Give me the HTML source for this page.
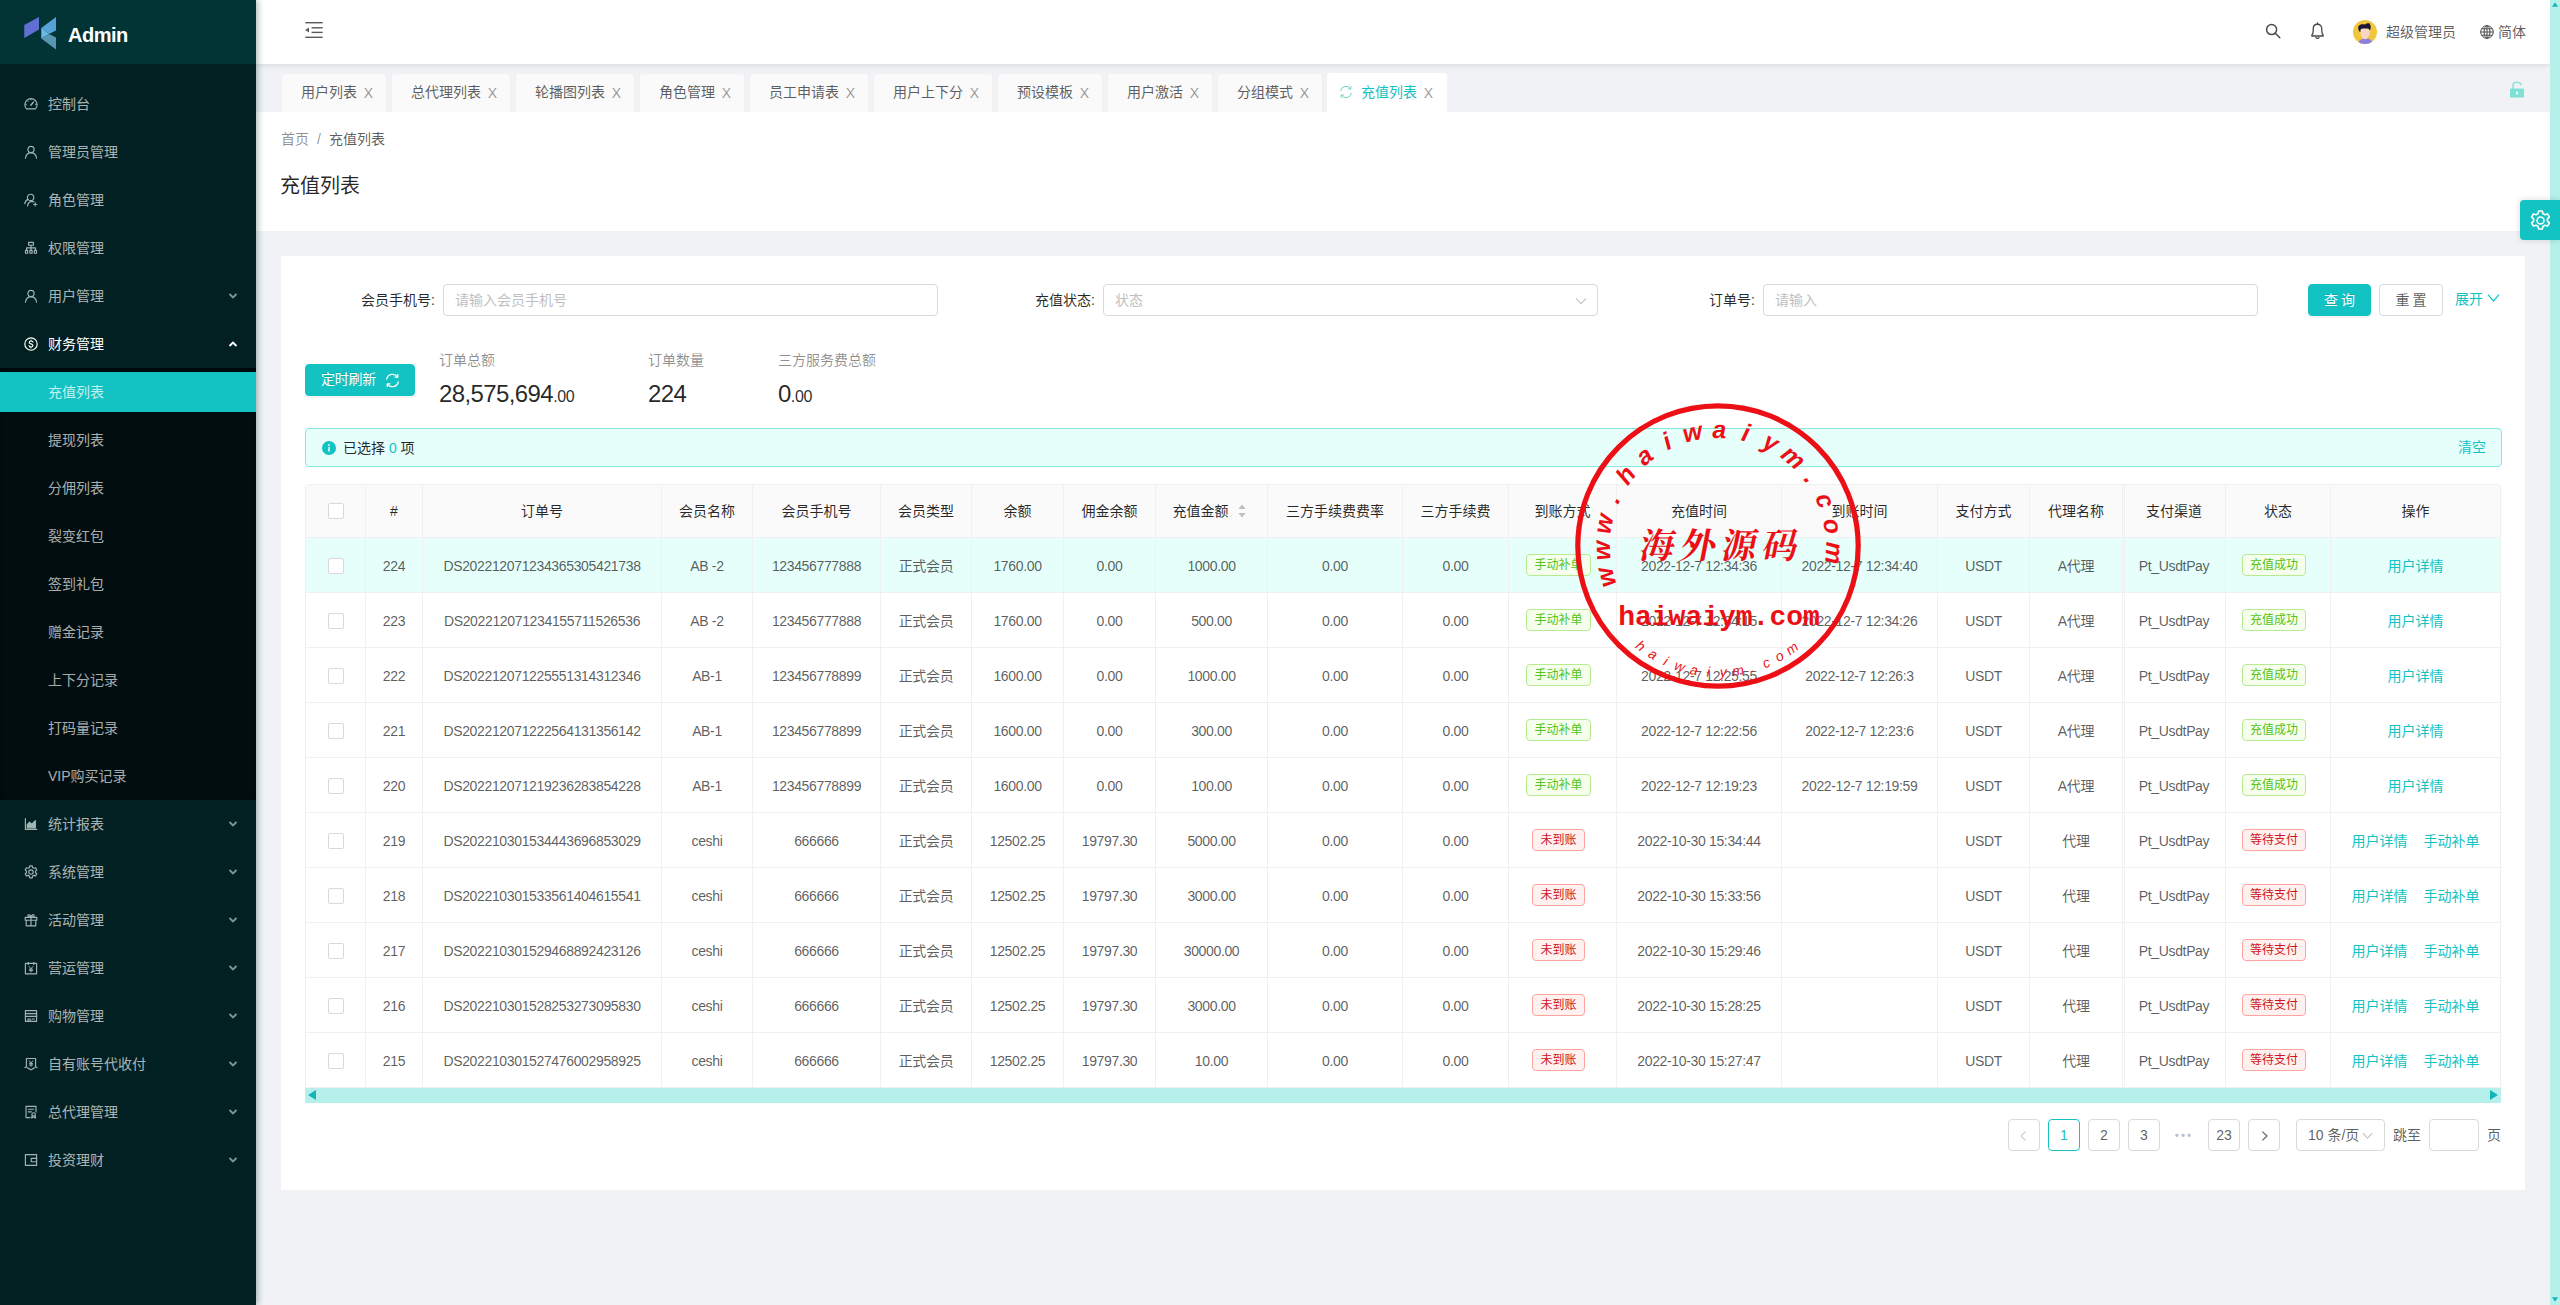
<!DOCTYPE html>
<html lang="zh-CN">
<head>
<meta charset="utf-8">
<title>充值列表 - Admin</title>
<style>
*{box-sizing:border-box;margin:0;padding:0}
html,body{width:2560px;height:1305px;overflow:hidden}
body{position:relative;background:#f0f2f5;font-family:"Liberation Sans","Noto Sans CJK SC",sans-serif;font-size:14px;color:rgba(0,0,0,.65);line-height:1.5715}
a{color:#13c2c2;text-decoration:none;cursor:pointer}
ul{list-style:none}
.abs{position:absolute}

/* ---------- sidebar ---------- */
#sider{position:absolute;left:0;top:0;width:256px;height:1305px;background:#022021;box-shadow:2px 0 6px rgba(0,45,48,.32);z-index:5}
#logo{position:absolute;left:0;top:0;width:256px;height:64px;background:#023435}
#logo svg{position:absolute;left:24px;top:16px}
#logo h1{position:absolute;left:68px;top:18px;font-size:20px;line-height:34px;font-weight:bold;color:#fff;font-family:"Liberation Sans",sans-serif;letter-spacing:-.5px}
.mi{position:absolute;left:0;width:256px;height:40px;line-height:40px;color:rgba(255,255,255,.68);font-size:14px}
.mi svg.ic{position:absolute;left:24px;top:13px}
.mi span.t{position:absolute;left:48px;top:0;white-space:nowrap}
.mi svg.ar{position:absolute;left:228px;top:15px}
.mi.open svg.ar{top:16px}
.mi.open{color:#fff}
#sub{position:absolute;left:0;top:368px;width:256px;height:432px;background:#010d0e;box-shadow:inset 0 3px 6px -2px rgba(0,0,0,.6)}
.mi.act{background:#13c2c2;color:#c2f0ee}

/* ---------- header ---------- */
#header{position:absolute;left:256px;top:0;width:2294px;height:64px;background:#fff;box-shadow:0 1px 6px rgba(0,21,41,.12);z-index:4}
#header .tog{position:absolute;left:49px;top:22px}
.hr{position:absolute;top:0;height:64px;line-height:64px;font-size:14px;color:rgba(0,0,0,.65);white-space:nowrap}

/* ---------- tabs ---------- */
#tabs{position:absolute;left:256px;top:64px;width:2294px;height:48px;background:#f0f2f5}
.tab{position:absolute;top:9px;height:39px;line-height:37px;background:#fafafa;border:1px solid #f0f0f0;border-bottom:none;border-radius:4px 4px 0 0;font-size:14px;color:rgba(0,0,0,.65);padding-left:19px;white-space:nowrap}
.tab i{font-style:normal;position:absolute;right:13px;top:1px;font-size:14px;color:rgba(0,0,0,.42);font-family:"Liberation Sans",sans-serif}
.tab.on{background:#fff;border-color:#fff;color:#13c2c2}

/* ---------- page header ---------- */
#ph{position:absolute;left:256px;top:112px;width:2294px;height:119px;background:#fff}
#crumb{position:absolute;left:25px;top:16px;font-size:14px;line-height:22px;color:rgba(0,0,0,.45);white-space:nowrap}
#crumb b{font-weight:normal;color:rgba(0,0,0,.65)}
#crumb em{font-style:normal;margin:0 8px}
#title{position:absolute;left:24px;top:58px;font-size:20px;line-height:32px;color:rgba(0,0,0,.85);font-weight:normal}

/* ---------- card ---------- */
#card{position:absolute;left:281px;top:256px;width:2244px;height:934px;background:#fff}
.lbl{position:absolute;top:28px;height:32px;line-height:32px;color:rgba(0,0,0,.85);font-size:14px;text-align:right;white-space:nowrap}
.inp{position:absolute;top:28px;height:32px;width:495px;border:1px solid #d9d9d9;border-radius:4px;background:#fff;line-height:30px;padding-left:11px;color:#bfbfbf;font-size:14px}
.btn{position:absolute;height:32px;line-height:30px;border-radius:4px;font-size:14px;text-align:center;border:1px solid #d9d9d9;background:#fff;color:rgba(0,0,0,.65)}
.btn.pri{background:#13c2c2;border-color:#13c2c2;color:#fff;text-shadow:0 -1px 0 rgba(0,0,0,.12);box-shadow:0 2px 0 rgba(0,0,0,.045)}
.stat{position:absolute;top:93px;white-space:nowrap}
.stat .k{font-size:14px;line-height:22px;color:rgba(0,0,0,.45);display:block}
.stat .v{font-size:24px;line-height:38px;color:rgba(0,0,0,.85);display:block;margin-top:4px;letter-spacing:-.6px;font-family:"Liberation Sans",sans-serif}
.stat .v small{font-size:16px;letter-spacing:-.3px}
#alert{position:absolute;left:24px;top:172px;width:2197px;height:39px;background:#e6fffb;border:1px solid #87e8de;border-radius:4px;line-height:37px;font-size:14px;color:rgba(0,0,0,.85)}
#alert svg{position:absolute;left:16px;top:12px}
#alert .m{position:absolute;left:37px;top:1px;white-space:nowrap}
#alert .m i{font-style:normal;color:#13c2c2}
#alert a{position:absolute;right:15px;top:0}

/* ---------- table ---------- */
.tblwrap{position:absolute;left:305px;top:484px;width:2196px}
.tbl{border-collapse:separate;border-spacing:0;table-layout:fixed;width:2196px;border-top:1px solid #f0f0f0;border-left:1px solid #f0f0f0;border-radius:4px 4px 0 0}
.tbl th,.tbl td{border-right:1px solid #f0f0f0;border-bottom:1px solid #f0f0f0;text-align:center;font-size:14px;white-space:nowrap;padding:0;overflow:hidden}
.tbl th{height:53px;background:#fafafa;color:rgba(0,0,0,.85);font-weight:normal}
.tbl td{height:55px;color:rgba(0,0,0,.65);background:#fff;letter-spacing:-.35px;padding-top:2px}
.tbl tr.hl td{background:#e6fffb}
.cb{display:inline-block;width:16px;height:16px;border:1px solid #d9d9d9;border-radius:2px;background:#fff;vertical-align:middle;position:relative;top:-1px}
.sortwrap{display:inline-block;position:relative;padding-right:18px;left:-2px}
.sorter{position:absolute;right:0;top:3px}
.tag{display:inline-block;height:22px;line-height:20px;padding:0 7px;font-size:12px;border:1px solid;border-radius:4px;letter-spacing:0;position:relative;top:-2px;margin-right:8px}
.tag.green{color:#52c41a;background:#f6ffed;border-color:#b7eb8f}
.tag.red{color:#cf1322;background:#fff1f0;border-color:#ffa39e}
.tbl td a{letter-spacing:0}
.tbl td a.a2{margin-left:16px}
.hscroll{position:relative;height:15px;width:2196px;background:#b5f1ea}
.hscroll svg{position:absolute;top:2px}
.hscroll svg.l{left:3px}
.hscroll svg.r{right:3px}

/* ---------- pagination ---------- */
.pg{position:absolute;top:1119px;height:32px;line-height:30px;border:1px solid #d9d9d9;border-radius:4px;background:#fff;text-align:center;font-size:14px;color:rgba(0,0,0,.65);font-family:"Liberation Sans","Noto Sans CJK SC",sans-serif}
.pg.on{border-color:#13c2c2;color:#13c2c2}
.pgt{position:absolute;top:1119px;height:32px;line-height:32px;font-size:14px;color:rgba(0,0,0,.65);white-space:nowrap}

/* ---------- misc ---------- */
#vscroll{position:absolute;left:2550px;top:0;width:10px;height:1305px;background:#b5f1ea;z-index:6}
#gear{position:absolute;left:2520px;top:200px;width:40px;height:40px;background:#13c2c2;border-radius:4px 0 0 4px;z-index:7;box-shadow:0 0 6px rgba(0,0,0,.15)}
#gear svg{position:absolute;left:8.5px;top:8.5px}
.stamp{position:absolute;left:1557.8px;top:386.4px;z-index:8}

</style>
</head>
<body>
<div id="sider">
<div id="logo"><svg width="34" height="34" viewBox="0 0 34 34"><path d="M0.25 9 L15 1 V13.5 L0.25 22 Z" fill="#5f6fd4"/><path d="M17.25 12 L32 1 V14.5 L25 18 Z" fill="#55a3d8"/><path d="M17.25 12 L25 18 L17.25 22.5 Z" fill="#6cb8e8"/><path d="M17.25 22.5 L25 18 L32 21.5 V33.5 Z" fill="#5896b2"/></svg><h1>Admin</h1></div>
<div class="mi" style="top:84px"><svg class="ic" width="14" height="14" viewBox="0 0 14 14" fill="none" stroke="#a3b4b4" stroke-width="1.15" stroke-linecap="round" stroke-linejoin="round"><path d="M2.5 11.9 A6.1 6.1 0 1 1 11.5 11.9 Z"/><path d="M6.8 8.2 L9.3 5.2" stroke-width="1.4"/><path d="M7 1.9v1M3.2 3.7l.7.7M10.8 3.7l-.5.5M1.6 7.3h1M11.4 7.3h1" stroke-width=".9"/></svg><span class="t">控制台</span></div>
<div class="mi" style="top:132px"><svg class="ic" width="14" height="14" viewBox="0 0 14 14" fill="none" stroke="#a3b4b4" stroke-width="1.15" stroke-linecap="round" stroke-linejoin="round"><circle cx="7" cy="4.4" r="3.1"/><path d="M1.5 13.1 C1.8 9.7 4.1 7.9 7 7.9 C9.9 7.9 12.2 9.7 12.5 13.1"/></svg><span class="t">管理员管理</span></div>
<div class="mi" style="top:180px"><svg class="ic" width="14" height="14" viewBox="0 0 14 14" fill="none" stroke="#a3b4b4" stroke-width="1.15" stroke-linecap="round" stroke-linejoin="round"><circle cx="6.6" cy="4.4" r="3.2"/><path d="M4 6.4 C2.2 7.2 1 8.6 .8 10.6"/><path d="M3.6 13 C3.8 10.4 5.4 8.6 7.8 8.4 C8.6 8.4 9.2 8.5 9.8 8.8"/><path d="M9.4 11.4 H13 M11.2 9.6 V13.2" stroke-width="1"/></svg><span class="t">角色管理</span></div>
<div class="mi" style="top:228px"><svg class="ic" width="14" height="14" viewBox="0 0 14 14" fill="none" stroke="#a3b4b4" stroke-width="1.15" stroke-linecap="round" stroke-linejoin="round"><rect x="4.6" y="1.4" width="4.8" height="2.8"/><path d="M7 4.2 V6.8 M2.6 9 V6.8 H11.4 V9 M7 6.8 V9"/><rect x="1.5" y="9.4" width="2.2" height="2.8"/><rect x="5.9" y="9.4" width="2.2" height="2.8"/><rect x="10.3" y="9.4" width="2.2" height="2.8"/></svg><span class="t">权限管理</span></div>
<div class="mi" style="top:276px"><svg class="ic" width="14" height="14" viewBox="0 0 14 14" fill="none" stroke="#a3b4b4" stroke-width="1.15" stroke-linecap="round" stroke-linejoin="round"><circle cx="7" cy="4.4" r="3.1"/><path d="M1.5 13.1 C1.8 9.7 4.1 7.9 7 7.9 C9.9 7.9 12.2 9.7 12.5 13.1"/></svg><span class="t">用户管理</span><svg class="ar" width="10" height="9" viewBox="0 0 10 9" fill="none" stroke="#7f9393" stroke-width="1.9" stroke-linejoin="miter"><path d="M1.5 3 L5 6.4 L8.5 3"/></svg></div>
<div class="mi open" style="top:324px"><svg class="ic" width="14" height="14" viewBox="0 0 14 14" fill="none" stroke="#fff" stroke-width="1.15" stroke-linecap="round" stroke-linejoin="round"><circle cx="7" cy="7" r="6.2"/><path d="M8.9 5.1 C8.5 4.3 7.8 4 7 4 C5.9 4 5.2 4.6 5.2 5.4 C5.2 7.3 8.9 6.4 8.9 8.5 C8.9 9.4 8.1 10 7 10 C6 10 5.3 9.6 5 8.8 M7 3v1 M7 10v1"/></svg><span class="t">财务管理</span><svg class="ar" width="10" height="9" viewBox="0 0 10 9" fill="none" stroke="#fff" stroke-width="1.9" stroke-linejoin="miter"><path d="M1.5 6 L5 2.6 L8.5 6"/></svg></div>
<div id="sub"></div>
<div class="mi act" style="top:372px"><span class="t">充值列表</span></div>
<div class="mi" style="top:420px"><span class="t">提现列表</span></div>
<div class="mi" style="top:468px"><span class="t">分佣列表</span></div>
<div class="mi" style="top:516px"><span class="t">裂变红包</span></div>
<div class="mi" style="top:564px"><span class="t">签到礼包</span></div>
<div class="mi" style="top:612px"><span class="t">赠金记录</span></div>
<div class="mi" style="top:660px"><span class="t">上下分记录</span></div>
<div class="mi" style="top:708px"><span class="t">打码量记录</span></div>
<div class="mi" style="top:756px"><span class="t">VIP购买记录</span></div>
<div class="mi" style="top:804px"><svg class="ic" width="14" height="14" viewBox="0 0 14 14" fill="none" stroke="#a3b4b4" stroke-width="1.15" stroke-linecap="round" stroke-linejoin="round"><path d="M1.4 1.6 V12.4 H12.8"/><path d="M3.2 10.8 V7.6 L5.6 5.2 L7.6 7.4 L11.4 3.6 V10.8 Z" fill="#a3b4b4"/></svg><span class="t">统计报表</span><svg class="ar" width="10" height="9" viewBox="0 0 10 9" fill="none" stroke="#7f9393" stroke-width="1.9" stroke-linejoin="miter"><path d="M1.5 3 L5 6.4 L8.5 3"/></svg></div>
<div class="mi" style="top:852px"><svg class="ic" width="14" height="14" viewBox="0 0 14 14" fill="none" stroke="#a3b4b4" stroke-width="1.15" stroke-linecap="round" stroke-linejoin="round"><circle cx="7" cy="7" r="2.2"/><path d="M5.8 .8 h2.4 l.4 1.7 l1.3 .75 l1.7 -.5 l1.2 2.1 l-1.3 1.2 v1.5 l1.3 1.2 l-1.2 2.1 l-1.7 -.5 l-1.3 .75 l-.4 1.7 h-2.4 l-.4 -1.7 l-1.3 -.75 l-1.7 .5 l-1.2 -2.1 l1.3 -1.2 v-1.5 l-1.3 -1.2 l1.2 -2.1 l1.7 .5 l1.3 -.75 Z"/></svg><span class="t">系统管理</span><svg class="ar" width="10" height="9" viewBox="0 0 10 9" fill="none" stroke="#7f9393" stroke-width="1.9" stroke-linejoin="miter"><path d="M1.5 3 L5 6.4 L8.5 3"/></svg></div>
<div class="mi" style="top:900px"><svg class="ic" width="14" height="14" viewBox="0 0 14 14" fill="none" stroke="#a3b4b4" stroke-width="1.15" stroke-linecap="round" stroke-linejoin="round"><rect x="1.2" y="4.4" width="11.6" height="2.8"/><path d="M2.2 7.2 V12.8 H11.8 V7.2 M7 4.4 V12.8"/><path d="M7 4.4 C5 4.4 3.6 3.6 3.9 2.4 C4.3 1.1 6.4 1.6 7 4.4 C7.6 1.6 9.7 1.1 10.1 2.4 C10.4 3.6 9 4.4 7 4.4"/></svg><span class="t">活动管理</span><svg class="ar" width="10" height="9" viewBox="0 0 10 9" fill="none" stroke="#7f9393" stroke-width="1.9" stroke-linejoin="miter"><path d="M1.5 3 L5 6.4 L8.5 3"/></svg></div>
<div class="mi" style="top:948px"><svg class="ic" width="14" height="14" viewBox="0 0 14 14" fill="none" stroke="#a3b4b4" stroke-width="1.15" stroke-linecap="round" stroke-linejoin="round"><rect x="1.4" y="2.4" width="11.2" height="10.4"/><path d="M4.2 1.2 V3.6 M9.8 1.2 V3.6"/><path d="M5.2 5.6 L7 7.8 L8.8 5.6 M7 7.8 V11 M5.4 8.2 H8.6 M5.4 9.6 H8.6" stroke-width=".95"/></svg><span class="t">营运管理</span><svg class="ar" width="10" height="9" viewBox="0 0 10 9" fill="none" stroke="#7f9393" stroke-width="1.9" stroke-linejoin="miter"><path d="M1.5 3 L5 6.4 L8.5 3"/></svg></div>
<div class="mi" style="top:996px"><svg class="ic" width="14" height="14" viewBox="0 0 14 14" fill="none" stroke="#a3b4b4" stroke-width="1.15" stroke-linecap="round" stroke-linejoin="round"><rect x="1.4" y="1.6" width="11.2" height="10.8"/><path d="M1.4 4.6 H12.6 M1.4 7.4 H12.6"/><path d="M4 12.4 V10 H6.2 V12.4 M8 10 H10.4"/></svg><span class="t">购物管理</span><svg class="ar" width="10" height="9" viewBox="0 0 10 9" fill="none" stroke="#7f9393" stroke-width="1.9" stroke-linejoin="miter"><path d="M1.5 3 L5 6.4 L8.5 3"/></svg></div>
<div class="mi" style="top:1044px"><svg class="ic" width="14" height="14" viewBox="0 0 14 14" fill="none" stroke="#a3b4b4" stroke-width="1.15" stroke-linecap="round" stroke-linejoin="round"><path d="M2.4 1.5 H11.6 V9.8 L13 10.6 M11.6 9.8 C10.6 11.6 8.6 11.4 7 12.9 C5.4 11.4 3.4 11.6 2.4 9.8 L1 10.6 M2.4 9.8 V1.5"/><path d="M5.2 3.8 L7 6 L8.8 3.8 M7 6 V9.4 M5.4 6.6 H8.6 M5.4 8 H8.6" stroke-width=".95"/></svg><span class="t">自有账号代收付</span><svg class="ar" width="10" height="9" viewBox="0 0 10 9" fill="none" stroke="#7f9393" stroke-width="1.9" stroke-linejoin="miter"><path d="M1.5 3 L5 6.4 L8.5 3"/></svg></div>
<div class="mi" style="top:1092px"><svg class="ic" width="14" height="14" viewBox="0 0 14 14" fill="none" stroke="#a3b4b4" stroke-width="1.15" stroke-linecap="round" stroke-linejoin="round"><path d="M12 7 V1.4 H2 V12.6 H6"/><path d="M4.2 4.2 H9.8 M4.2 6.8 H7.4"/><circle cx="9.6" cy="9.4" r="1.7"/><path d="M8.2 10.6 L7.6 13 L9.6 12 L11.6 13 L11 10.6"/></svg><span class="t">总代理管理</span><svg class="ar" width="10" height="9" viewBox="0 0 10 9" fill="none" stroke="#7f9393" stroke-width="1.9" stroke-linejoin="miter"><path d="M1.5 3 L5 6.4 L8.5 3"/></svg></div>
<div class="mi" style="top:1140px"><svg class="ic" width="14" height="14" viewBox="0 0 14 14" fill="none" stroke="#a3b4b4" stroke-width="1.15" stroke-linecap="round" stroke-linejoin="round"><rect x="1.4" y="1.6" width="11.2" height="10.8"/><path d="M12.6 5.3 H7.2 V8.7 H12.6"/></svg><span class="t">投资理财</span><svg class="ar" width="10" height="9" viewBox="0 0 10 9" fill="none" stroke="#7f9393" stroke-width="1.9" stroke-linejoin="miter"><path d="M1.5 3 L5 6.4 L8.5 3"/></svg></div>
</div>
<div id="header">
<svg class="tog" width="18" height="16" viewBox="0 0 18 16" fill="#595959"><rect x="0.3" y="0" width="17.4" height="1.4"/><rect x="6.6" y="5.1" width="11.1" height="1.4"/><rect x="6.6" y="9.7" width="11.1" height="1.4"/><rect x="0.3" y="14.6" width="17.4" height="1.4"/><path d="M0.2 8.1 L4 5.6 V10.6 Z"/></svg>
<svg class="abs" style="left:2009px;top:23px" width="16" height="16" viewBox="0 0 16 16" fill="none" stroke="#4a4a4a" stroke-width="1.5" stroke-linecap="round"><circle cx="6.6" cy="6.6" r="5"/><path d="M10.3 10.3 L14.8 14.8"/></svg>
<svg class="abs" style="left:2054px;top:22px" width="15" height="18" viewBox="0 0 16 18" preserveAspectRatio="none" fill="none" stroke="#4a4a4a" stroke-width="1.4" stroke-linejoin="round" stroke-linecap="round"><path d="M2 14 H14 V13 C13 12 12.6 11 12.6 9 V7 C12.6 4 10.6 2.3 8 2.3 C5.4 2.3 3.4 4 3.4 7 V9 C3.4 11 3 12 2 13 Z"/><path d="M8 1 V2.2"/><path d="M6.4 15.6 C6.8 16.6 9.2 16.6 9.6 15.6"/></svg>
<svg class="abs" style="left:2097px;top:20px" width="24" height="24" viewBox="0 0 24 24"><defs><clipPath id="avc"><circle cx="12" cy="12" r="12"/></clipPath></defs><circle cx="12" cy="12" r="12" fill="#f0c63c"/><g clip-path="url(#avc)"><path d="M5 24 C6 19.5 9 18.5 13 18.5 C17 18.5 19 20 19.5 24 Z" fill="#8b7fe0"/><path d="M7.2 9 C7 14 8.6 18.8 11.8 19.2 C15 19.4 16.8 15.5 16.8 10.5 C16.6 8 14 6.5 11.5 6.8 C9 7 7.4 7.8 7.2 9 Z" fill="#f6d6c4"/><path d="M5.2 8 C5 4.6 9 3.6 12 4.6 C14 2.6 17.6 2.6 17.2 5 C18.4 6.4 17.6 9.6 16.8 10.6 C16.4 8.8 14.6 8.6 12.6 8.6 C10.6 8.6 8.6 8.4 7.6 9.4 L7.4 12 C6 11.6 5.2 9.8 5.2 8 Z" fill="#1d1730"/></g></svg>
<div class="hr" style="left:2130px">超级管理员</div>
<svg class="abs" style="left:2224px;top:25px" width="14" height="14" viewBox="0 0 14 14" fill="none" stroke="#4a4a4a" stroke-width="1"><circle cx="7" cy="7" r="6.3"/><ellipse cx="7" cy="7" rx="2.9" ry="6.3"/><path d="M7 .7 V13.3 M.7 7 H13.3 M1.6 3.8 H12.4 M1.6 10.2 H12.4"/></svg>
<div class="hr" style="left:2242px">简体</div>
</div>
<div id="tabs">
<div class="tab" style="left:25px;width:106px">用户列表<i>X</i></div>
<div class="tab" style="left:135px;width:120px">总代理列表<i>X</i></div>
<div class="tab" style="left:259px;width:120px">轮播图列表<i>X</i></div>
<div class="tab" style="left:383px;width:106px">角色管理<i>X</i></div>
<div class="tab" style="left:493px;width:120px">员工申请表<i>X</i></div>
<div class="tab" style="left:617px;width:120px">用户上下分<i>X</i></div>
<div class="tab" style="left:741px;width:106px">预设模板<i>X</i></div>
<div class="tab" style="left:851px;width:106px">用户激活<i>X</i></div>
<div class="tab" style="left:961px;width:106px">分组模式<i>X</i></div>
<div class="tab on" style="left:1071px;width:120px;padding-left:33px"><svg class="abs" style="left:11px;top:11px" width="14" height="14" viewBox="0 0 14 14" fill="none" stroke="#74d3cb" stroke-width="1" stroke-linecap="round"><path d="M1.6 5.6 A5.6 5.6 0 0 1 11.6 3.6"/><path d="M12.4 8.4 A5.6 5.6 0 0 1 2.4 10.4"/><path d="M11.9 1.4 V3.9 H9.4" stroke-linejoin="round"/><path d="M2.1 12.6 V10.1 H4.6" stroke-linejoin="round"/></svg>充值列表<i>X</i></div>
<svg class="abs" style="left:2253px;top:17px" width="16" height="17" viewBox="0 0 16 17"><path d="M4 8 V4.6 C4 2.4 5.8 1.2 8 1.2 C10.2 1.2 11.6 2.2 12 3.8" fill="none" stroke="#8fe0d8" stroke-width="1.6" stroke-linecap="round"/><rect x="1" y="7.4" width="14" height="9" rx="1" fill="#7fe0d6"/><rect x="7.2" y="10.4" width="1.6" height="3" fill="#fff"/></svg>
</div>
<div id="ph"><div id="crumb">首页<em>/</em><b>充值列表</b></div><h2 id="title">充值列表</h2></div>
<div id="card">
<div class="lbl" style="left:59px;width:95px">会员手机号:</div>
<div class="inp" style="left:162px">请输入会员手机号</div>
<div class="lbl" style="left:719px;width:95px">充值状态:</div>
<div class="inp" style="left:822px">状态<svg class="abs" style="right:10px;top:10px" width="12" height="12" viewBox="0 0 12 12" fill="none" stroke="#bfbfbf" stroke-width="1.1"><path d="M1 3.4 L6 8.8 L11 3.4"/></svg></div>
<div class="lbl" style="left:1399px;width:75px">订单号:</div>
<div class="inp" style="left:1482px">请输入</div>
<div class="btn pri" style="left:2027px;top:28px;width:63px;letter-spacing:3px;padding-left:3px">查询</div>
<div class="btn" style="left:2098px;top:28px;width:64px;letter-spacing:3px;padding-left:3px">重置</div>
<a class="abs" style="left:2174px;top:28px;line-height:30px;white-space:nowrap">展开<svg style="margin-left:4px;position:relative;top:0px" width="13" height="12" viewBox="0 0 13 12" fill="none" stroke="#13c2c2" stroke-width="1.2"><path d="M1 2.6 L6.5 9 L12 2.6"/></svg></a>
<div class="btn pri" style="left:24px;top:108px;width:110px;text-align:left;padding-left:15px;letter-spacing:-.3px;line-height:28px">定时刷新<svg class="abs" style="left:79px;top:8px" width="15" height="15" viewBox="0 0 14 14" fill="none" stroke="#fff" stroke-width="1.2" stroke-linecap="round"><path d="M1.6 5.6 A5.6 5.6 0 0 1 11.6 3.6"/><path d="M12.4 8.4 A5.6 5.6 0 0 1 2.4 10.4"/><path d="M11.9 1.4 V3.9 H9.4" stroke-linejoin="round"/><path d="M2.1 12.6 V10.1 H4.6" stroke-linejoin="round"/></svg></div>
<div class="stat" style="left:158px"><span class="k">订单总额</span><span class="v">28,575,694<small>.00</small></span></div>
<div class="stat" style="left:367px"><span class="k">订单数量</span><span class="v">224</span></div>
<div class="stat" style="left:497px"><span class="k">三方服务费总额</span><span class="v">0<small>.00</small></span></div>
<div id="alert"><svg width="14" height="14" viewBox="0 0 14 14"><circle cx="7" cy="7" r="7" fill="#13c2c2"/><rect x="6.3" y="5.8" width="1.4" height="4.8" fill="#fff"/><circle cx="7" cy="3.9" r=".9" fill="#fff"/></svg><span class="m">已选择 <i>0</i> 项</span><a>清空</a></div>
</div>
<div class="tblwrap">
<table class="tbl">
<colgroup><col style="width:60px"><col style="width:57px"><col style="width:239px"><col style="width:91px"><col style="width:128px"><col style="width:91px"><col style="width:92px"><col style="width:92px"><col style="width:112px"><col style="width:135px"><col style="width:106px"><col style="width:108px"><col style="width:165px"><col style="width:156px"><col style="width:92px"><col style="width:93px"><col style="width:103px"><col style="width:105px"><col style="width:170px"></colgroup>
<thead><tr><th><span class="cb"></span></th><th>#</th><th>订单号</th><th>会员名称</th><th>会员手机号</th><th>会员类型</th><th>余额</th><th>佣金余额</th><th><span class="sortwrap">充值金额<svg class="sorter" width="10" height="16" viewBox="0 0 10 16"><path d="M5 1.5 L8.6 6 H1.4 Z" fill="#bfbfbf"/><path d="M5 14.5 L8.6 10 H1.4 Z" fill="#bfbfbf"/></svg></span></th><th>三方手续费费率</th><th>三方手续费</th><th>到账方式</th><th>充值时间</th><th>到账时间</th><th>支付方式</th><th>代理名称</th><th>支付渠道</th><th>状态</th><th>操作</th></tr></thead>
<tbody>
<tr class="hl"><td><span class="cb"></span></td><td>224</td><td>DS202212071234365305421738</td><td>AB -2</td><td>123456777888</td><td>正式会员</td><td>1760.00</td><td>0.00</td><td>1000.00</td><td>0.00</td><td>0.00</td><td><span class="tag green">手动补单</span></td><td>2022-12-7 12:34:36</td><td>2022-12-7 12:34:40</td><td>USDT</td><td>A代理</td><td>Pt_UsdtPay</td><td><span class="tag green">充值成功</span></td><td><a>用户详情</a></td></tr>
<tr><td><span class="cb"></span></td><td>223</td><td>DS202212071234155711526536</td><td>AB -2</td><td>123456777888</td><td>正式会员</td><td>1760.00</td><td>0.00</td><td>500.00</td><td>0.00</td><td>0.00</td><td><span class="tag green">手动补单</span></td><td>2022-12-7 12:34:15</td><td>2022-12-7 12:34:26</td><td>USDT</td><td>A代理</td><td>Pt_UsdtPay</td><td><span class="tag green">充值成功</span></td><td><a>用户详情</a></td></tr>
<tr><td><span class="cb"></span></td><td>222</td><td>DS202212071225551314312346</td><td>AB-1</td><td>123456778899</td><td>正式会员</td><td>1600.00</td><td>0.00</td><td>1000.00</td><td>0.00</td><td>0.00</td><td><span class="tag green">手动补单</span></td><td>2022-12-7 12:25:55</td><td>2022-12-7 12:26:3</td><td>USDT</td><td>A代理</td><td>Pt_UsdtPay</td><td><span class="tag green">充值成功</span></td><td><a>用户详情</a></td></tr>
<tr><td><span class="cb"></span></td><td>221</td><td>DS202212071222564131356142</td><td>AB-1</td><td>123456778899</td><td>正式会员</td><td>1600.00</td><td>0.00</td><td>300.00</td><td>0.00</td><td>0.00</td><td><span class="tag green">手动补单</span></td><td>2022-12-7 12:22:56</td><td>2022-12-7 12:23:6</td><td>USDT</td><td>A代理</td><td>Pt_UsdtPay</td><td><span class="tag green">充值成功</span></td><td><a>用户详情</a></td></tr>
<tr><td><span class="cb"></span></td><td>220</td><td>DS202212071219236283854228</td><td>AB-1</td><td>123456778899</td><td>正式会员</td><td>1600.00</td><td>0.00</td><td>100.00</td><td>0.00</td><td>0.00</td><td><span class="tag green">手动补单</span></td><td>2022-12-7 12:19:23</td><td>2022-12-7 12:19:59</td><td>USDT</td><td>A代理</td><td>Pt_UsdtPay</td><td><span class="tag green">充值成功</span></td><td><a>用户详情</a></td></tr>
<tr><td><span class="cb"></span></td><td>219</td><td>DS202210301534443696853029</td><td>ceshi</td><td>666666</td><td>正式会员</td><td>12502.25</td><td>19797.30</td><td>5000.00</td><td>0.00</td><td>0.00</td><td><span class="tag red">未到账</span></td><td>2022-10-30 15:34:44</td><td></td><td>USDT</td><td>代理</td><td>Pt_UsdtPay</td><td><span class="tag red">等待支付</span></td><td><a>用户详情</a><a class="a2">手动补单</a></td></tr>
<tr><td><span class="cb"></span></td><td>218</td><td>DS202210301533561404615541</td><td>ceshi</td><td>666666</td><td>正式会员</td><td>12502.25</td><td>19797.30</td><td>3000.00</td><td>0.00</td><td>0.00</td><td><span class="tag red">未到账</span></td><td>2022-10-30 15:33:56</td><td></td><td>USDT</td><td>代理</td><td>Pt_UsdtPay</td><td><span class="tag red">等待支付</span></td><td><a>用户详情</a><a class="a2">手动补单</a></td></tr>
<tr><td><span class="cb"></span></td><td>217</td><td>DS202210301529468892423126</td><td>ceshi</td><td>666666</td><td>正式会员</td><td>12502.25</td><td>19797.30</td><td>30000.00</td><td>0.00</td><td>0.00</td><td><span class="tag red">未到账</span></td><td>2022-10-30 15:29:46</td><td></td><td>USDT</td><td>代理</td><td>Pt_UsdtPay</td><td><span class="tag red">等待支付</span></td><td><a>用户详情</a><a class="a2">手动补单</a></td></tr>
<tr><td><span class="cb"></span></td><td>216</td><td>DS202210301528253273095830</td><td>ceshi</td><td>666666</td><td>正式会员</td><td>12502.25</td><td>19797.30</td><td>3000.00</td><td>0.00</td><td>0.00</td><td><span class="tag red">未到账</span></td><td>2022-10-30 15:28:25</td><td></td><td>USDT</td><td>代理</td><td>Pt_UsdtPay</td><td><span class="tag red">等待支付</span></td><td><a>用户详情</a><a class="a2">手动补单</a></td></tr>
<tr><td><span class="cb"></span></td><td>215</td><td>DS202210301527476002958925</td><td>ceshi</td><td>666666</td><td>正式会员</td><td>12502.25</td><td>19797.30</td><td>10.00</td><td>0.00</td><td>0.00</td><td><span class="tag red">未到账</span></td><td>2022-10-30 15:27:47</td><td></td><td>USDT</td><td>代理</td><td>Pt_UsdtPay</td><td><span class="tag red">等待支付</span></td><td><a>用户详情</a><a class="a2">手动补单</a></td></tr>
</tbody>
</table>
<div class="hscroll"><svg class="l" width="8" height="10" viewBox="0 0 8 10"><path d="M0 5 L8 0 V10 Z" fill="#13b5b8"/></svg><svg class="r" width="8" height="10" viewBox="0 0 8 10"><path d="M8 5 L0 0 V10 Z" fill="#13b5b8"/></svg></div>
</div>
<div class="pg" style="left:2008px;width:32px"><svg width="12" height="12" viewBox="0 0 12 12" fill="none" stroke="#c9c9c9" stroke-width="1.1" style="position:relative;top:2px"><path d="M7.6 1.6 L3 6 L7.6 10.4"/></svg></div>
<div class="pg on" style="left:2048px;width:32px">1</div>
<div class="pg" style="left:2088px;width:32px">2</div>
<div class="pg" style="left:2128px;width:32px">3</div>
<div class="pgt" style="left:2168px;width:32px;top:1120px;text-align:center;color:rgba(0,0,0,.25);letter-spacing:2px;font-size:12px">•••</div>
<div class="pg" style="left:2208px;width:32px">23</div>
<div class="pg" style="left:2248px;width:32px"><svg width="12" height="12" viewBox="0 0 12 12" fill="none" stroke="#595959" stroke-width="1.1" style="position:relative;top:2px"><path d="M4.4 1.6 L9 6 L4.4 10.4"/></svg></div>
<div class="pg" style="left:2296px;width:89px;text-align:left;padding-left:11px">10 条/页<svg class="abs" style="right:11px;top:10px" width="11" height="11" viewBox="0 0 12 12" fill="none" stroke="#bfbfbf" stroke-width="1.1"><path d="M1 3.4 L6 8.8 L11 3.4"/></svg></div>
<div class="pgt" style="left:2393px">跳至</div>
<div class="pg" style="left:2429px;width:50px"></div>
<div class="pgt" style="left:2487px">页</div>
<svg class="stamp" width="320" height="320" viewBox="0 0 320 320">
<circle cx="160" cy="160" r="140.2" fill="none" stroke="#ec1016" stroke-width="5.2"/>
<text x="58.6 52.5 52.1 60.1 69.7 86.3 109.6 126.8 154.2 182.5 203.1 221.5 245.0 256.7 265.1 268.5" y="198.4 174.1 149.0 118.9 100.3 80.7 64.4 56.8 51.9 54.3 60.7 70.6 93.2 111.3 134.1 155.5" rotate="-105.6 -92.3 -79.1 -65.8 -52.5 -39.2 -26.0 -12.7 0.6 13.9 27.1 40.4 53.7 67.0 80.2 93.5" font-size="25" fill="#ec1016" font-family="'Liberation Sans', sans-serif" font-weight="bold" font-style="italic">www.haiwaiym.com</text>
<text x="0" y="0" transform="translate(162 172) skewX(-11)" text-anchor="middle" font-family="'Liberation Serif', 'Noto Serif CJK SC', serif" font-weight="bold" font-size="35" letter-spacing="6" fill="#ec1016">海外源码</text>
<text x="161" y="239" text-anchor="middle" font-family="'Liberation Mono', monospace" font-weight="bold" font-size="28" letter-spacing="0" fill="#ec1016">haiwaiym.com</text>
<text x="76.8 89.2 104.6 115.5 131.2 148.6 162.0 174.9 193.7 206.8 220.3 231.9" y="261.3 270.3 278.7 283.3 287.9 290.5 291.0 290.3 286.6 282.4 276.3 269.7" rotate="37.7 31.0 24.3 17.7 11.0 4.3 -2.4 -9.1 -15.8 -22.4 -29.1 -35.8" font-size="14" fill="#ec1016" font-family="'Liberation Sans', sans-serif" font-style="italic">haiwaiym.com</text>
</svg>
<div id="xl" class="abs" style="left:2124px;top:485px;width:1px;height:603px;background:#f0f0f0;z-index:2"></div>
<div id="vscroll"><svg class="abs" style="left:2px;top:2px" width="6" height="5" viewBox="0 0 8 6"><path d="M4 0 L8 6 H0 Z" fill="#13b5b8"/></svg><svg class="abs" style="left:2px;top:1297px" width="6" height="5" viewBox="0 0 8 6"><path d="M4 6 L8 0 H0 Z" fill="#13b5b8"/></svg></div>
<div id="gear"><svg width="23" height="23" viewBox="0 0 14 14" fill="none" stroke="#fff" stroke-width="1" stroke-linejoin="round"><circle cx="7" cy="7" r="2.1"/><path d="M5.9 1.2 h2.2 l.4 1.6 l1.2 .7 l1.6 -.5 l1.1 1.9 l-1.2 1.1 v1.4 l1.2 1.1 l-1.1 1.9 l-1.6 -.5 l-1.2 .7 l-.4 1.6 h-2.2 l-.4 -1.6 l-1.2 -.7 l-1.6 .5 l-1.1 -1.9 l1.2 -1.1 v-1.4 l-1.2 -1.1 l1.1 -1.9 l1.6 .5 l1.2 -.7 Z"/></svg></div>
</body>
</html>
